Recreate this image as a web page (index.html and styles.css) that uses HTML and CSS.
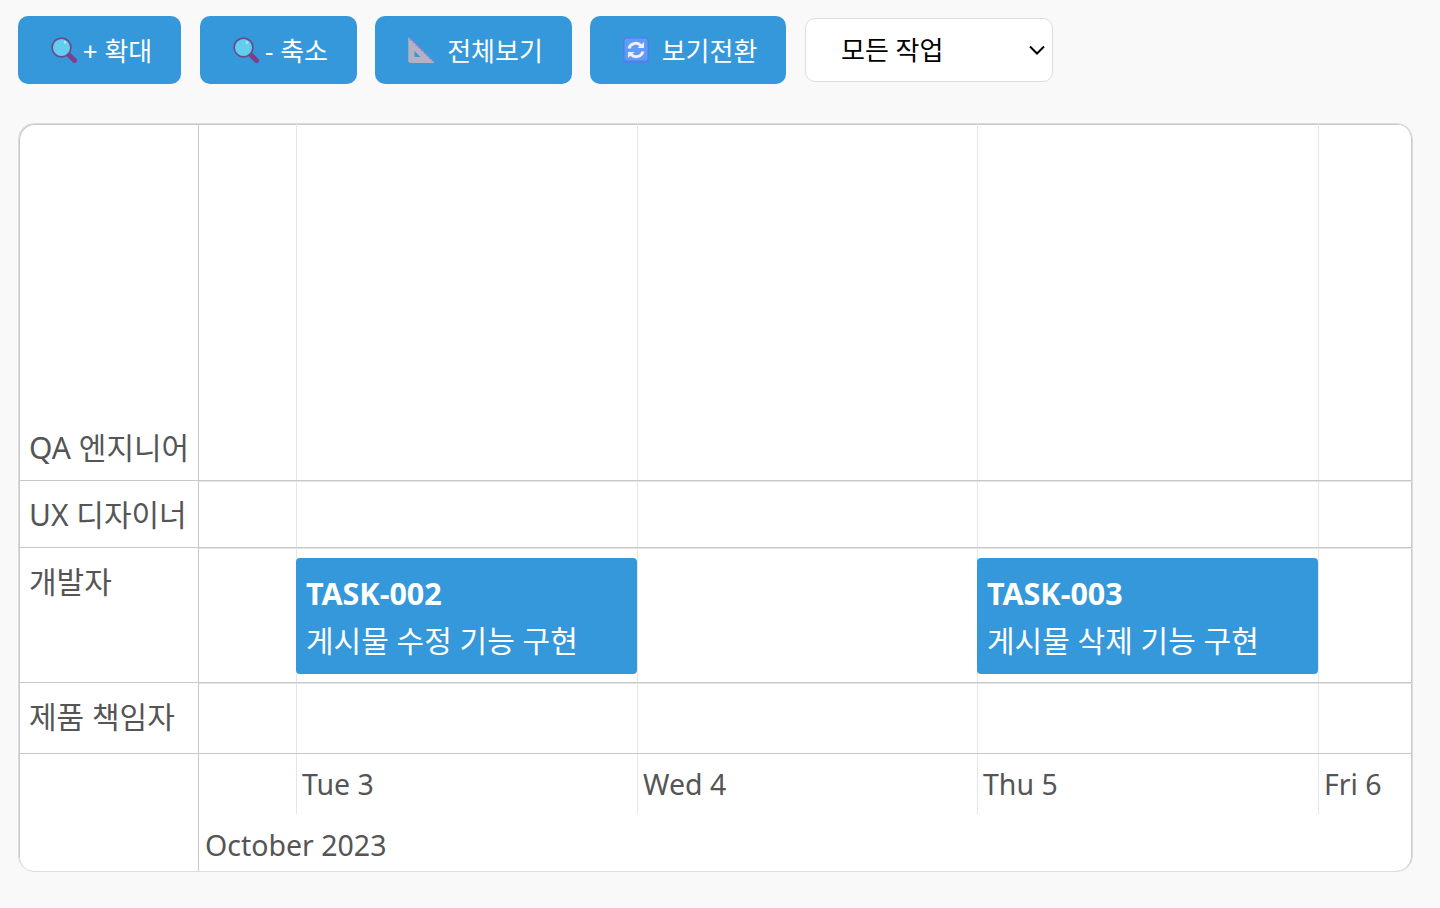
FILE: index.html
```html
<!DOCTYPE html>
<html lang="ko">
<head>
  <meta charset="UTF-8" />
  <meta name="viewport" content="width=device-width, initial-scale=1.0" />
  <title>간트 차트</title>
  <link rel="stylesheet" href="styles.css">
</head>
<body>

  <div class="toolbar">
    <button class="tool-btn btn-zoom-in">
      <svg class="icon" viewBox="0 0 26 26"><use href="#ico-search" /></svg>
      <span>+ 확대</span>
    </button>
    <button class="tool-btn btn-zoom-out">
      <svg class="icon" viewBox="0 0 26 26"><use href="#ico-search" /></svg>
      <span>- 축소</span>
    </button>
    <button class="tool-btn btn-fit">
      <svg class="icon" viewBox="0 0 26 26">
        <path d="M0.8 1 L26 25.5 H2.3 Q0.8 25.5 0.8 24 Z M6 13 V20.5 H13.5 Z" fill="#b5b0c2" fill-rule="evenodd" stroke="#b5b0c2" stroke-linejoin="round" />
        <path d="M2.5 2 L25 24" stroke="#9a78d8" stroke-width="1.8" stroke-dasharray="1.8 2" fill="none" />
      </svg>
      <span>전체보기</span>
    </button>
    <button class="tool-btn btn-switch">
      <svg class="icon" viewBox="0 0 26 26">
        <rect x="0" y="0" width="26" height="26" rx="3.5" fill="#4f80ea" />
        <rect x="1.5" y="1.5" width="23" height="22" rx="2.5" fill="#5f9cf6" />
        <path d="M6 11.5 A7 6.5 0 0 1 18 8.5" fill="none" stroke="#f4ecf8" stroke-width="3" />
        <path d="M14.5 11 H21 V5 Z" fill="#f4ecf8" />
        <path d="M20 14.5 A7 6.5 0 0 1 8 17.5" fill="none" stroke="#f4ecf8" stroke-width="3" />
        <path d="M11.5 15 H5 V21 Z" fill="#f4ecf8" />
      </svg>
      <span>보기전환</span>
    </button>
    <select class="task-filter">
      <option>모든 작업</option>
    </select>
  </div>

  <svg class="icon-defs" width="0" height="0">
    <symbol id="ico-search" viewBox="0 0 26 26">
      <path d="M17 17 L23.5 23.5" stroke="#7f3f88" stroke-width="5" stroke-linecap="round" />
      <circle cx="10.5" cy="10.5" r="9.4" fill="#62cdec" stroke="#6a4a8e" stroke-width="1.7" />
      <circle cx="14" cy="5.5" r="1.4" fill="#a9e6f6" />
    </symbol>
  </svg>

  <div class="gantt">
    <div class="row row-qa">
      <div class="row-label">QA 엔지니어</div>
      <div class="track">
        <div class="cell"></div><div class="cell"></div><div class="cell"></div><div class="cell"></div><div class="cell"></div>
      </div>
    </div>
    <div class="row row-ux">
      <div class="row-label">UX 디자이너</div>
      <div class="track">
        <div class="cell"></div><div class="cell"></div><div class="cell"></div><div class="cell"></div><div class="cell"></div>
      </div>
    </div>
    <div class="row row-dev">
      <div class="row-label">개발자</div>
      <div class="track">
        <div class="cell"></div>
        <div class="cell">
          <div class="task"><strong>TASK-002</strong><span>게시물 수정 기능 구현</span></div>
        </div>
        <div class="cell"></div>
        <div class="cell">
          <div class="task"><strong>TASK-003</strong><span>게시물 삭제 기능 구현</span></div>
        </div>
        <div class="cell"></div>
      </div>
    </div>
    <div class="row row-pm">
      <div class="row-label">제품 책임자</div>
      <div class="track">
        <div class="cell"></div><div class="cell"></div><div class="cell"></div><div class="cell"></div><div class="cell"></div>
      </div>
    </div>
    <div class="row row-axis">
      <div class="row-label"></div>
      <div class="axis">
        <div class="track days">
          <div class="cell"></div>
          <div class="cell">Tue 3</div>
          <div class="cell">Wed 4</div>
          <div class="cell">Thu 5</div>
          <div class="cell">Fri 6</div>
        </div>
        <div class="month">October 2023</div>
      </div>
    </div>
  </div>

</body>
</html>
```

FILE: styles.css
```css
body {
  margin: 0;
  padding: 16px 18px;
  font-family: 'Noto Sans', 'Noto Sans CJK KR', sans-serif;
  background-color: #f9f9f9;
  color: #555;
}

.icon-defs {
  position: absolute;
}

.toolbar {
  display: flex;
  align-items: center;
  margin-bottom: 39px;
}

.tool-btn {
  display: flex;
  align-items: center;
  justify-content: center;
  gap: 6px;
  height: 68px;
  padding: 0 0 0 4px;
  background: #3498db;
  color: #fff;
  border: none;
  border-radius: 10px;
  font-family: inherit;
  font-size: 26px;
  white-space: nowrap;
  cursor: pointer;
}

.btn-zoom-in { width: 163px; margin-right: 19px; }
.btn-zoom-out { width: 157px; margin-right: 18px; }
.btn-fit { width: 197px; gap: 13px; margin-right: 18px; }
.btn-switch { width: 196px; gap: 13px; margin-right: 19px; }

.icon {
  width: 26px;
  height: 26px;
  flex: none;
}

.task-filter {
  appearance: none;
  width: 248px;
  height: 64px;
  padding-left: 35px;
  background-color: #fff;
  background-image: url("data:image/svg+xml,%3Csvg xmlns='http://www.w3.org/2000/svg' width='16' height='10'%3E%3Cpath d='M1 1.5 L8 8.5 L15 1.5' fill='none' stroke='%23000' stroke-width='2'/%3E%3C/svg%3E");
  background-repeat: no-repeat;
  background-position: right 7px center;
  color: #000;
  border: 1px solid #ddd;
  border-radius: 10px;
  font-family: inherit;
  font-size: 26px;
}

.gantt {
  width: 1395px;
  height: 749px;
  display: flex;
  flex-direction: column;
  background: #fff;
  border: 1px solid #ddd;
  border-radius: 16px;
  box-shadow: inset 1px 1px 0 #c8c8c8, inset -1px 0 0 #c8c8c8;
  box-sizing: border-box;
  overflow: hidden;
}

.row {
  display: flex;
  border-bottom: 1px solid #c8c8c8;
}

.row-qa { height: 356px; }
.row-ux { height: 66px; }
.row-dev { height: 134px; }
.row-pm { height: 70px; }
.row-axis { flex: 1; border-bottom: none; }

.row-label {
  width: 169px;
  flex: none;
  padding: 0 0 0 10px;
  border-right: 1px solid #c8c8c8;
  font-size: 30px;
  line-height: 40px;
}

.row-qa .row-label { display: flex; align-items: flex-end; padding-bottom: 12px; box-sizing: content-box; }
.row-ux .row-label,
.row-pm .row-label { display: flex; align-items: center; }
.row-ux .row-label { padding-top: 2px; }
.row-pm .row-label { padding-bottom: 2px; }
.row-dev .row-label { padding-top: 14px; }

.track {
  flex: 1;
  display: grid;
  grid-template-columns: 97px 341px 340px 341px 1fr;
  box-sizing: border-box;
  border-top: 1px solid #e4e4e4;
}

.row-qa .track {
  border-top: none;
}

.cell {
  border-left: 1px solid #e6e6e6;
  min-width: 0;
}

.cell:first-child {
  border-left: none;
}

.task {
  display: flex;
  flex-direction: column;
  gap: 8px;
  height: 116px;
  margin: 9px 0 0 -1px;
  padding: 2px 10px 0;
  justify-content: center;
  box-sizing: border-box;
  background: #3498db;
  border-radius: 4px;
  color: #fff;
  font-size: 30px;
  line-height: 40px;
  white-space: nowrap;
}

.task strong {
  font-size: 30.5px;
}

.axis {
  flex: 1;
  display: flex;
  flex-direction: column;
  font-size: 28.5px;
}

.days {
  flex: none;
  height: 60px;
  line-height: 60px;
  border-top: none;
}

.days .cell {
  padding-left: 5px;
}

.month {
  padding: 7px 0 0 6px;
  line-height: 48px;
}
```
